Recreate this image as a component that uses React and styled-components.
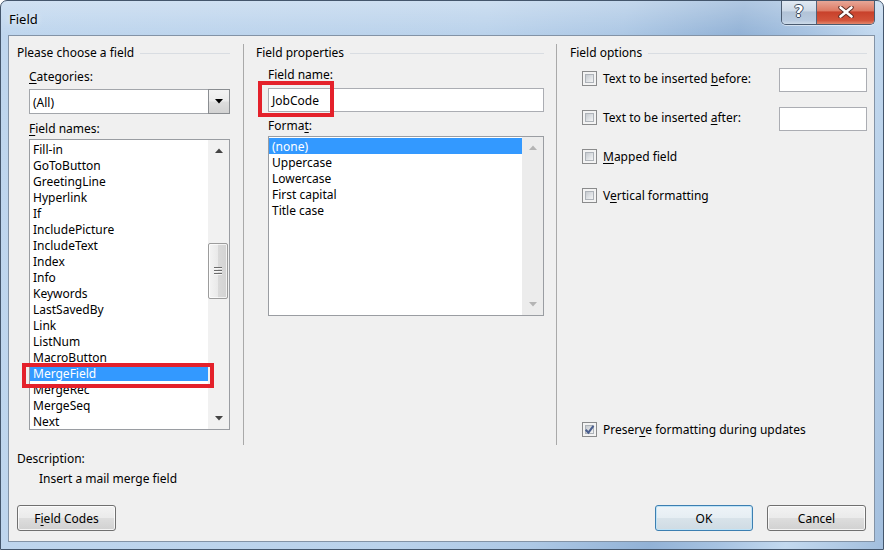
import React from 'react';
import styled, { createGlobalStyle, css } from 'styled-components';

const GlobalStyle = createGlobalStyle`
  html, body { margin: 0; padding: 0; }
  body {
    font-family: "Noto Sans", "Liberation Sans", sans-serif;
    font-size: 12px;
    color: #000;
    background: #fff;
  }
  * { box-sizing: border-box; }
`;

const Window = styled.div`
  width: 884px;
  height: 550px;
  display: flex;
  flex-direction: column;
  border: 1px solid #44566c;
  border-radius: 7px 7px 0 0;
  padding: 0 8px 7px 7px;
  overflow: hidden;
  background:
    linear-gradient(to bottom, rgba(255,255,255,0.28), rgba(255,255,255,0) 34px),
    linear-gradient(100deg, #bfd6ee 0%, #bad2eb 50%, #adc8e5 64%, #92b2d6 76%, #a6c2e1 83%, #c3d9ef 90%, #a2bedd 100%);
`;

const TitleBar = styled.div`
  height: 34px;
  flex: none;
  display: flex;
  align-items: flex-start;
`;

const Title = styled.div`
  margin-top: 9px;
  padding-left: 1px;
  font-size: 13px;
  line-height: 19px;
  text-shadow: 0 0 6px rgba(255,255,255,0.9);
`;

const Caption = styled.div`
  margin-left: auto;
  margin-top: -1px;
  display: flex;
  height: 25px;
  border: 1px solid #4a5b70;
  border-top: none;
  border-radius: 0 0 5px 5px;
  overflow: hidden;
  box-shadow: 0 1px 0 rgba(255,255,255,0.5);
`;

const CapButton = styled.div`
  width: ${p => p.$w}px;
  height: 100%;
  display: flex;
  align-items: center;
  justify-content: center;
  ${p => p.$close ? css`
    background: linear-gradient(to bottom, #e9ab9c 0%, #dd7a64 45%, #c8412b 50%, #d2533a 85%, #e2876c 100%);
  ` : css`
    background: linear-gradient(to bottom, #e2eaf3 0%, #ccd9e7 45%, #b2c3d7 50%, #b8cadf 85%, #cddbe9 100%);
    border-right: 1px solid #51637a;
  `}
`;

const HelpGlyph = styled.span`
  font-family: "DejaVu Sans", sans-serif;
  font-weight: bold;
  font-size: 16px;
  line-height: 16px;
  color: #fff;
  text-shadow: 1px 0 0 #3b4a5e, -1px 0 0 #3b4a5e, 0 1px 0 #3b4a5e, 0 -1px 0 #3b4a5e;
`;

const Client = styled.div`
  flex: 1;
  display: flex;
  flex-direction: column;
  background: #f0f0f0;
  border: 1px solid #8393a6;
  padding: 8px 0 10px 0;
`;

const Columns = styled.div`
  height: 401px;
  display: grid;
  grid-template-columns: 235px 313px 1fr;
`;

const Column = styled.div`
  display: flex;
  flex-direction: column;
  padding: ${p => p.$pad};
  ${p => p.$sep && css`border-right: 1px solid #a9a9a9;`}
`;

const GroupHeader = styled.div`
  display: flex;
  align-items: flex-start;
  height: 16px;
  line-height: 18px;
  white-space: nowrap;
`;

const Rule = styled.div`
  flex: 1;
  height: 1px;
  margin-left: 6px;
  margin-top: 9px;
  background: #d9dde2;
`;

const Indent = styled.div`
  display: flex;
  flex-direction: column;
  padding-left: 12px;
  flex: 1;
`;

const Label = styled.div`
  line-height: 18px;
  height: 16px;
  margin-top: ${p => p.$mt || 0}px;
  white-space: nowrap;
`;

const U = styled.span`
  text-decoration: underline;
  text-underline-offset: 2px;
`;

const Combo = styled.div`
  margin-top: 5px;
  height: 25px;
  display: flex;
  border: 1px solid #a3a6ab;
  background: #fff;
`;

const ComboValue = styled.div`
  flex: 1;
  padding-left: 3px;
  line-height: 25px;
`;

const DropButton = styled.div`
  width: 22px;
  margin: -1px -1px -1px 0;
  border: 1px solid #8a8d91;
  background: linear-gradient(to bottom, #f3f3f3 0%, #ececec 48%, #dedede 52%, #d2d2d2 100%);
  display: flex;
  align-items: center;
  justify-content: center;
`;

const ListBox = styled.div`
  position: relative;
  margin-top: 3px;
  height: ${p => p.$h}px;
  display: flex;
  border: 1px solid #9a9da2;
  background: #fff;
`;

const Items = styled.div`
  flex: 1;
  padding-top: 1px;
  overflow: hidden;
`;

const Item = styled.div`
  height: 16px;
  line-height: 18px;
  padding-left: 3px;
  white-space: nowrap;
  ${p => p.$selected && css`
    background: #3399ff;
    color: #fff;
  `}
`;

const ScrollBar = styled.div`
  width: 21px;
  flex: none;
  display: flex;
  flex-direction: column;
  background: ${p => p.$disabled ? '#ececec' : '#f1f1f1'};
`;

const ArrowZone = styled.div`
  height: 21px;
  flex: none;
  display: flex;
  align-items: center;
  justify-content: center;
`;

const Track = styled.div`
  flex: 1;
  display: flex;
  flex-direction: column;
  padding-top: ${p => p.$offset || 0}px;
`;

const Thumb = styled.div`
  height: ${p => p.$size}px;
  margin: 0 1px 0 0;
  border: 1px solid #9c9c9c;
  border-radius: 2px;
  background: linear-gradient(to right, #f4f4f4 0%, #e9e9e9 50%, #d9d9d9 51%, #d3d3d3 100%);
  box-shadow: inset 0 0 0 1px rgba(255,255,255,0.7);
  display: flex;
  align-items: center;
  justify-content: center;
`;

const Grip = styled.div`
  width: 8px;
  height: 9px;
  background: repeating-linear-gradient(to bottom, #6b6b6b 0 1px, #f6f6f6 1px 2px, transparent 2px 3px);
`;

const TextBox = styled.div`
  height: 24px;
  width: ${p => p.$w ? `${p.$w}px` : 'auto'};
  margin-top: ${p => p.$mt || 0}px;
  margin-left: ${p => p.$auto ? 'auto' : '0'};
  border: 1px solid #abadb3;
  background: #fff;
  padding-left: 3px;
  line-height: 23px;
  position: relative;
  flex: none;
`;

const Annotation = styled.div`
  position: absolute;
  left: ${p => p.$x}px;
  top: ${p => p.$y}px;
  width: ${p => p.$w}px;
  height: ${p => p.$h}px;
  border: 4px solid #e4212b;
  pointer-events: none;
`;

const OptionRow = styled.div`
  display: flex;
  align-items: flex-start;
  min-height: 24px;
  margin-top: ${p => p.$mt || 0}px;
  ${p => p.$bottom && css`
    margin-top: auto;
    margin-bottom: 2px;
  `}
`;

const CheckItem = styled.div`
  display: flex;
  align-items: center;
  height: 16px;
  margin-top: 2px;
  white-space: nowrap;
`;

const CheckText = styled.span`
  line-height: 18px;
  height: 16px;
`;

const CheckBox = styled.div`
  position: relative;
  width: 15px;
  height: 15px;
  margin-right: 6px;
  border: 1px solid #8a8b8c;
  background: #f3f3f3;
  flex: none;
  &::after {
    content: "";
    position: absolute;
    inset: 2px;
    border: 1px solid #aeb3b9;
    background: linear-gradient(135deg, #c6cacf 0%, #dfe2e5 55%, #f4f4f4 100%);
  }
  svg { position: absolute; left: 1px; top: 1px; z-index: 1; }
`;

const Description = styled.div`
  margin-top: 5px;
  padding-left: 8px;
`;

const DescText = styled.div`
  margin-top: 4px;
  padding-left: 22px;
  line-height: 18px;
  height: 16px;
`;

const Footer = styled.div`
  margin-top: 19px;
  display: flex;
  gap: 14px;
  padding: 0 8px;
`;

const Button = styled.div`
  width: ${p => p.$w}px;
  height: 26px;
  display: flex;
  align-items: center;
  justify-content: center;
  border-radius: 3px;
  padding-top: 1px;
  ${p => p.$push && css`margin-left: auto;`}
  ${p => p.$default ? css`
    border: 1px solid #3c7fb1;
    background: linear-gradient(to bottom, #eef4f8 0%, #e6eef3 48%, #d8e3ea 52%, #cfdbe3 100%);
    box-shadow: inset 0 0 0 1px #bfe3f7;
  ` : css`
    border: 1px solid #707070;
    background: linear-gradient(to bottom, #f2f2f2 0%, #ebebeb 48%, #dddddd 52%, #d1d1d1 100%);
    box-shadow: inset 0 0 0 1px rgba(255,255,255,0.75);
  `}
`;

const Arrow = ({ up, color = '#444' }) => (
  <svg width="8" height="5" viewBox="0 0 8 5">
    {up ? <polygon points="0,5 4,0.5 8,5" fill={color} /> : <polygon points="0,0 8,0 4,4.5" fill={color} />}
  </svg>
);

const CheckMark = () => (
  <svg width="11" height="11" viewBox="0 0 10 10">
    <path d="M1.5 5.2 L4 7.8 L8.6 1.6" fill="none" stroke="#4b5f8e" strokeWidth="1.9" />
  </svg>
);

const fieldNames = ['Fill-in', 'GoToButton', 'GreetingLine', 'Hyperlink', 'If', 'IncludePicture', 'IncludeText', 'Index', 'Info', 'Keywords', 'LastSavedBy', 'Link', 'ListNum', 'MacroButton', 'MergeField', 'MergeRec', 'MergeSeq', 'Next'];
const formats = ['(none)', 'Uppercase', 'Lowercase', 'First capital', 'Title case'];

export default function App() {
  return (
    <>
      <GlobalStyle />
      <Window>
        <TitleBar>
          <Title>Field</Title>
          <Caption>
            <CapButton $w={35}><HelpGlyph>?</HelpGlyph></CapButton>
            <CapButton $w={57} $close>
              <svg width="16" height="12" viewBox="0 0 16 12">
                <path d="M2.5 1.5 L13.5 10.5 M13.5 1.5 L2.5 10.5" stroke="#5a2a22" strokeWidth="4.4" strokeLinecap="round" />
                <path d="M2.5 1.5 L13.5 10.5 M13.5 1.5 L2.5 10.5" stroke="#fff" strokeWidth="2.6" strokeLinecap="round" />
              </svg>
            </CapButton>
          </Caption>
        </TitleBar>
        <Client>
          <Columns>
            <Column $sep $pad="0 13px 0 8px">
              <GroupHeader>Please choose a field<Rule /></GroupHeader>
              <Indent>
                <Label $mt={8}><U>C</U>ategories:</Label>
                <Combo>
                  <ComboValue>(All)</ComboValue>
                  <DropButton><Arrow color="#000" /></DropButton>
                </Combo>
                <Label $mt={6}><U>F</U>ield names:</Label>
                <ListBox $h={291}>
                  <Items>
                    {fieldNames.map(n => (
                      <Item key={n} $selected={n === 'MergeField'}>{n}</Item>
                    ))}
                  </Items>
                  <ScrollBar>
                    <ArrowZone><Arrow up /></ArrowZone>
                    <Track $offset={82}>
                      <Thumb $size={56}><Grip /></Thumb>
                    </Track>
                    <ArrowZone><Arrow /></ArrowZone>
                  </ScrollBar>
                  <Annotation $x={-8} $y={223} $w={192} $h={25} />
                </ListBox>
              </Indent>
            </Column>
            <Column $sep $pad="0 12px 0 12px">
              <GroupHeader>Field properties<Rule /></GroupHeader>
              <Indent>
                <Label $mt={6}>Field nam<U>e</U>:</Label>
                <TextBox $mt={6}>
                  JobCode
                  <Annotation $x={-11} $y={-8} $w={76} $h={36} />
                </TextBox>
                <Label $mt={5}>Forma<U>t</U>:</Label>
                <ListBox $h={180}>
                  <Items>
                    {formats.map(f => (
                      <Item key={f} $selected={f === '(none)'}>{f}</Item>
                    ))}
                  </Items>
                  <ScrollBar $disabled>
                    <ArrowZone><Arrow up color="#b4b4b4" /></ArrowZone>
                    <Track />
                    <ArrowZone><Arrow color="#b4b4b4" /></ArrowZone>
                  </ScrollBar>
                </ListBox>
              </Indent>
            </Column>
            <Column $pad="0 7px 0 13px">
              <GroupHeader>Field options<Rule /></GroupHeader>
              <Indent>
                <OptionRow $mt={8}>
                  <CheckItem><CheckBox /><CheckText>Text to be inserted <U>b</U>efore:</CheckText></CheckItem>
                  <TextBox $w={88} $auto />
                </OptionRow>
                <OptionRow $mt={15}>
                  <CheckItem><CheckBox /><CheckText>Text to be inserted <U>a</U>fter:</CheckText></CheckItem>
                  <TextBox $w={88} $auto />
                </OptionRow>
                <OptionRow $mt={15}>
                  <CheckItem><CheckBox /><CheckText><U>M</U>apped field</CheckText></CheckItem>
                </OptionRow>
                <OptionRow $mt={15}>
                  <CheckItem><CheckBox /><CheckText>V<U>e</U>rtical formatting</CheckText></CheckItem>
                </OptionRow>
                <OptionRow $bottom>
                  <CheckItem><CheckBox><CheckMark /></CheckBox><CheckText>Preser<U>v</U>e formatting during updates</CheckText></CheckItem>
                </OptionRow>
              </Indent>
            </Column>
          </Columns>
          <Description>
            <Label>Description:</Label>
            <DescText>Insert a mail merge field</DescText>
          </Description>
          <Footer>
            <Button $w={99}><span>F<U>i</U>eld Codes</span></Button>
            <Button $w={98} $push $default>OK</Button>
            <Button $w={99}>Cancel</Button>
          </Footer>
        </Client>
      </Window>
    </>
  );
}
